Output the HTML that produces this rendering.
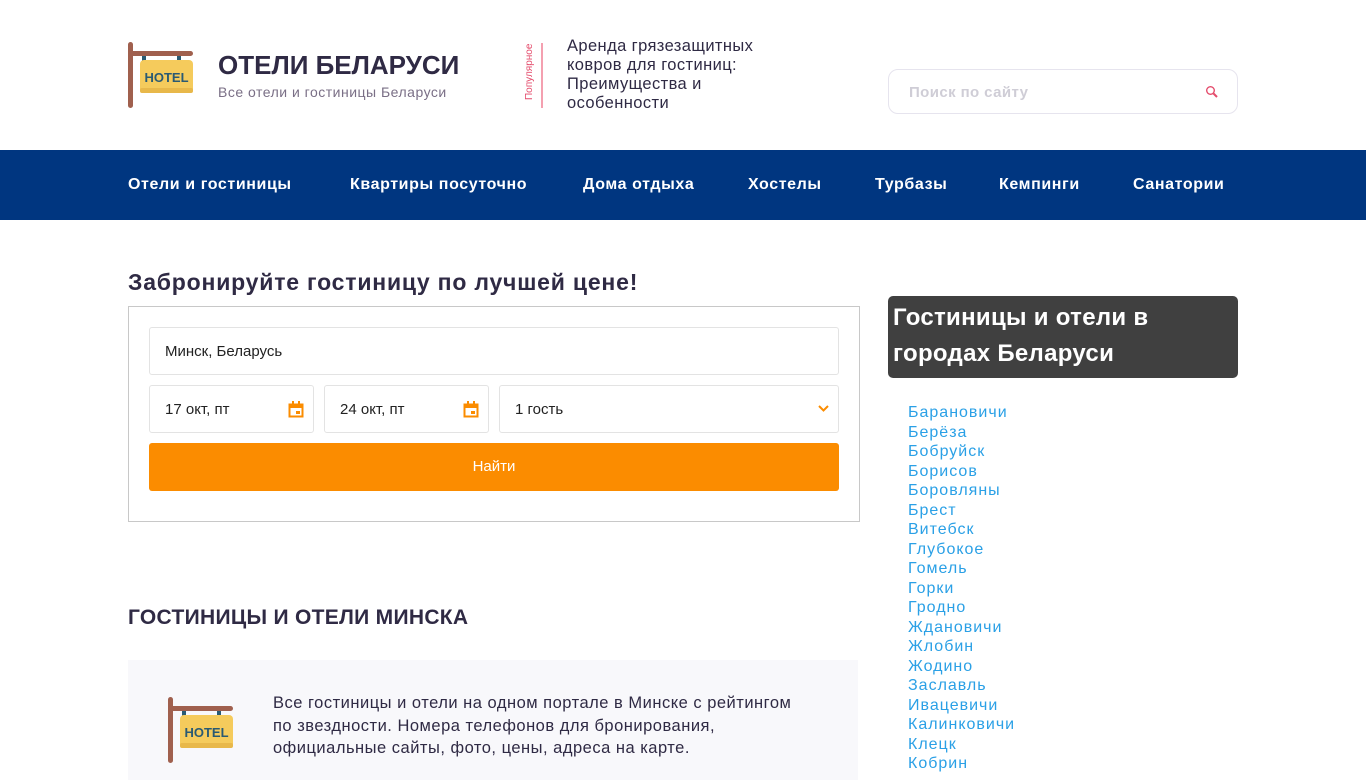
<!DOCTYPE html>
<html><head><meta charset="utf-8"><style>
*{box-sizing:border-box;margin:0;padding:0}
body{width:1366px;height:768px;overflow:hidden;background:#fff;font-family:"Liberation Sans",sans-serif;color:#2f2a44;position:relative}
.a{position:absolute}
.nav{top:150px;left:0;width:1366px;height:70px;background:#003680}
.nav span{position:absolute;top:26px;color:#fff;font-size:16px;font-weight:bold;white-space:nowrap;letter-spacing:0.6px}
.inp{position:absolute;border:1px solid #e3e3e3;border-radius:3px;background:#fff;font-size:15px;color:#222;padding-left:15px;line-height:48px;height:48px}
.cities{left:908px;top:403px;font-size:16px;color:#2aa0e6;line-height:19.5px;letter-spacing:1px}
</style></head><body>
<svg class="a" style="left:126px;top:40px" width="70" height="70" viewBox="0 0 70 70">
<rect x="2" y="2" width="5" height="66" rx="2.5" fill="#a0604e"/>
<rect x="2" y="11" width="65" height="5" rx="2.5" fill="#a0604e"/>
<rect x="16" y="16" width="4" height="9" fill="#2a5a73"/><rect x="51" y="16" width="4" height="9" fill="#2a5a73"/>
<rect x="14" y="20" width="53" height="33" rx="4" fill="#f5cb5c"/>
<rect x="14" y="48" width="53" height="5" rx="2" fill="#e8b84a"/>
<text x="40.5" y="42" font-family="Liberation Sans" font-weight="bold" font-size="13" fill="#2a5a73" text-anchor="middle">HOTEL</text>
</svg>
<div class="a" style="left:218px;top:50px;font-size:26px;font-weight:bold;color:#2f2a44">ОТЕЛИ БЕЛАРУСИ</div>
<div class="a" style="left:218px;top:84px;font-size:14px;color:#7a6f86;letter-spacing:0.5px">Все отели и гостиницы Беларуси</div>
<div class="a" style="left:505px;top:70px;transform:rotate(-90deg);transform-origin:center;font-size:10px;color:#e44c6c;width:50px;text-align:center;line-height:10px">Популярное</div>
<div class="a" style="left:541px;top:43px;width:2px;height:65px;background:#f4a0b0"></div>
<div class="a" style="left:567px;top:37px;width:215px;font-size:16.5px;line-height:19px;color:#2f2a44;letter-spacing:0.4px">Аренда грязезащитных ковров для гостиниц: Преимущества и особенности</div>
<div class="a" style="left:888px;top:69px;width:350px;height:45px;border:1px solid #e6e4ee;border-radius:10px"></div>
<div class="a" style="left:909px;top:84px;font-size:15px;font-weight:bold;color:#cfcdd6;letter-spacing:0.4px">Поиск по сайту</div>
<svg class="a" style="left:1205px;top:85px" width="14" height="14" viewBox="0 0 14 14"><circle cx="5.5" cy="5.5" r="3.8" fill="none" stroke="#e44c6c" stroke-width="1.4"/><line x1="8.5" y1="8.5" x2="12" y2="12" stroke="#e44c6c" stroke-width="2"/></svg>
<div class="a nav">
<span style="left:128px">Отели и гостиницы</span><span style="left:350px">Квартиры посуточно</span><span style="left:583px">Дома отдыха</span><span style="left:748px">Хостелы</span><span style="left:875px">Турбазы</span><span style="left:999px">Кемпинги</span><span style="left:1133px">Санатории</span>
</div>
<div class="a" style="left:128px;top:269px;font-size:23px;font-weight:bold;letter-spacing:0.8px">Забронируйте гостиницу по лучшей цене!</div>
<div class="a" style="left:128px;top:306px;width:732px;height:216px;border:1px solid #c8c8c8"></div>
<div class="inp" style="left:149px;top:327px;width:690px">Минск, Беларусь</div>
<div class="inp" style="left:149px;top:385px;width:165px">17 окт, пт</div>
<div class="inp" style="left:324px;top:385px;width:165px">24 окт, пт</div>
<div class="inp" style="left:499px;top:385px;width:340px">1 гость</div>
<svg class="a" style="left:288px;top:401px" width="16" height="17" viewBox="0 0 16 17"><rect x="1.5" y="3.5" width="13" height="12" fill="none" stroke="#fb8c00" stroke-width="2"/><rect x="1" y="3" width="14" height="4" fill="#fb8c00"/><rect x="4" y="0" width="2" height="4" fill="#fb8c00"/><rect x="10" y="0" width="2" height="4" fill="#fb8c00"/><rect x="8" y="10" width="4" height="3" fill="#fb8c00"/></svg>
<svg class="a" style="left:463px;top:401px" width="16" height="17" viewBox="0 0 16 17"><rect x="1.5" y="3.5" width="13" height="12" fill="none" stroke="#fb8c00" stroke-width="2"/><rect x="1" y="3" width="14" height="4" fill="#fb8c00"/><rect x="4" y="0" width="2" height="4" fill="#fb8c00"/><rect x="10" y="0" width="2" height="4" fill="#fb8c00"/><rect x="8" y="10" width="4" height="3" fill="#fb8c00"/></svg>
<svg class="a" style="left:817px;top:404px" width="13" height="9" viewBox="0 0 13 9"><path d="M2 2l4.5 4.5L11 2" fill="none" stroke="#fb8c00" stroke-width="2"/></svg>
<div class="a" style="left:149px;top:443px;width:690px;height:48px;background:#fb8c00;border-radius:3px;color:#fff;font-size:15px;text-align:center;line-height:48px">Найти</div>
<div class="a" style="left:128px;top:606px;font-size:21px;font-weight:bold;color:#2f2a44;letter-spacing:0.3px">ГОСТИНИЦЫ И ОТЕЛИ МИНСКА</div>
<div class="a" style="left:128px;top:660px;width:730px;height:120px;background:#f8f8fb"></div>
<svg class="a" style="left:166px;top:695px" width="70" height="70" viewBox="0 0 70 70">
<rect x="2" y="2" width="5" height="66" rx="2.5" fill="#a0604e"/>
<rect x="2" y="11" width="65" height="5" rx="2.5" fill="#a0604e"/>
<rect x="16" y="16" width="4" height="9" fill="#2a5a73"/><rect x="51" y="16" width="4" height="9" fill="#2a5a73"/>
<rect x="14" y="20" width="53" height="33" rx="4" fill="#f5cb5c"/>
<rect x="14" y="48" width="53" height="5" rx="2" fill="#e8b84a"/>
<text x="40.5" y="42" font-family="Liberation Sans" font-weight="bold" font-size="13" fill="#2a5a73" text-anchor="middle">HOTEL</text>
</svg>
<div class="a" style="left:273px;top:692px;width:580px;font-size:16.5px;line-height:22.5px;color:#2f2a44;letter-spacing:0.5px;white-space:nowrap">Все гостиницы и отели на одном портале в Минске с рейтингом<br>по звездности. Номера телефонов для бронирования,<br>официальные сайты, фото, цены, адреса на карте.</div>
<div class="a" style="left:888px;top:296px;width:350px;height:82px;background:#404040;border-radius:5px;color:#fff;font-size:24px;line-height:36px;padding:4px 5px;font-weight:bold;letter-spacing:0.3px">Гостиницы и отели в городах Беларуси</div>
<div class="a cities">Барановичи<br>Берёза<br>Бобруйск<br>Борисов<br>Боровляны<br>Брест<br>Витебск<br>Глубокое<br>Гомель<br>Горки<br>Гродно<br>Ждановичи<br>Жлобин<br>Жодино<br>Заславль<br>Ивацевичи<br>Калинковичи<br>Клецк<br>Кобрин</div>
</body></html>
